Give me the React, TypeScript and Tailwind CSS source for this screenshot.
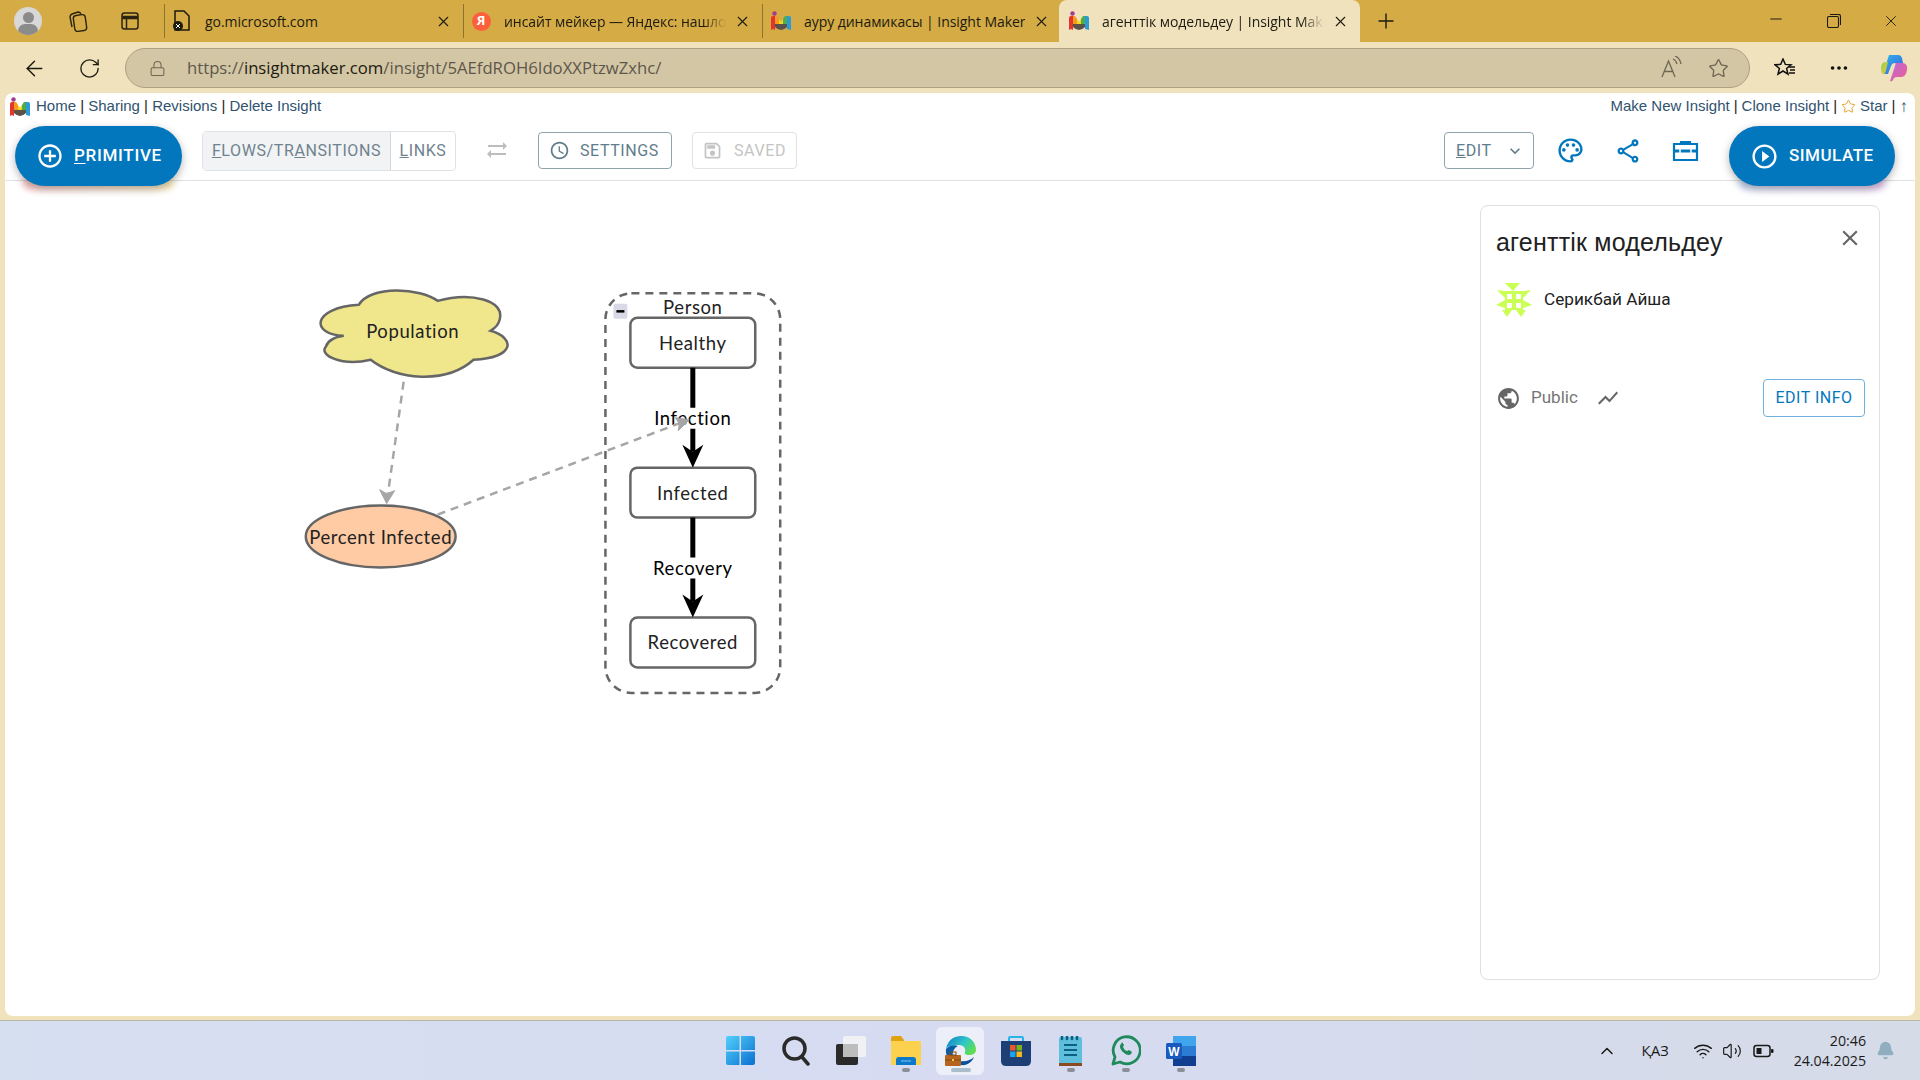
import React from "react"
import { ArrowLeft, RotateCw, Lock, Star, X, Plus, Minus, MoreHorizontal, ChevronUp, Wifi, Volume2, Bell } from "lucide-react"
import {
  MdAddCircleOutline, MdAccessTime, MdOutlineSave, MdSyncAlt, MdExpandMore, MdOutlinePalette, MdOutlineShare,
  MdPlayCircleOutline, MdPublic, MdShowChart, MdClose,
} from "react-icons/md"

function ImLogo({ size = 20 }: { size?: number }) {
  return (
    <svg width={size} height={size} viewBox="0 0 20 20">
      <circle cx="3.5" cy="2.5" r="2.2" fill="#a63a8c" />
      <path d="M0 19V7q0-2 2-2h2v14l-2-1z" fill="#e5352b" />
      <path d="M4 5h2l2 3v5H4z" fill="#f39a1f" />
      <path d="M8 8l2 3 2-3v5H8z" fill="#f7d21e" />
      <path d="M12 8l2-3h2v8h-4z" fill="#4cae4a" />
      <path d="M16 5h2q2 0 2 2v12l-4-1z" fill="#2a9bd8" />
      <path d="M4 13h12v3q-3 3-6 3t-6-3z" fill="#5a5148" />
    </svg>
  )
}

function Tab({ cls, icon, title, active, fade }: { cls: string; icon: React.ReactNode; title: string; active?: boolean; fade?: boolean }) {
  return (
    <div className={`${cls} flex items-center gap-[8px] ${active ? "h-full bg-[#f0e2bd] rounded-t-lg" : "border-l border-[#8d7230] h-[34px]"}`}>
      <div className="w-[24px] flex justify-center shrink-0">{icon}</div>
      <div className={`flex-1 whitespace-nowrap overflow-hidden text-[14px] tracking-[-0.05px] text-[#1d1a10] pl-[3px] ${fade ? "[mask-image:linear-gradient(to_right,black_90%,transparent)]" : ""}`}>{title}</div>
      <X className="w-[17px] h-[17px] text-[#1d1a10] shrink-0" strokeWidth={1.5} />
    </div>
  )
}

function Chrome() {
  return (
    <>
      <div className="h-[42px] bg-[#d4ab45] flex items-center shrink-0">
        <div className="w-[164px] h-full flex items-center shrink-0">
          <div className="ml-[14px] w-[28px] h-[28px] rounded-full bg-[#d8d8d8] overflow-hidden relative">
            <div className="absolute left-[9px] top-[5px] w-[11px] h-[11px] rounded-full bg-[#8b8b8b]" />
            <div className="absolute left-[4px] top-[17px] w-[20px] h-[14px] rounded-full bg-[#8b8b8b]" />
          </div>
          <svg className="ml-[26px]" width="20" height="22" viewBox="0 0 20 22" fill="none" stroke="#2b2410" strokeWidth="1.4">
            <rect x="6" y="5" width="12" height="16" rx="3" transform="rotate(-8 12 13)" />
            <path d="M4 17L2 7q0-2 2-3l6-2q2 0 3 2" />
          </svg>
          <svg className="ml-[33px]" width="18" height="18" viewBox="0 0 18 18" fill="none" stroke="#2b2410" strokeWidth="1.5">
            <rect x="1" y="1" width="16" height="16" rx="2.5" />
            <path d="M1 5.5h16" strokeWidth="3.5" />
            <path d="M5.5 5.5V17" />
          </svg>
        </div>
        <Tab cls="w-[299px] pl-[5px] pr-[11px]" title="go.microsoft.com" icon={
          <svg width="18" height="22" viewBox="0 0 18 22">
            <path d="M2 1h9l5 5v14H2z" fill="none" stroke="#1d1a10" strokeWidth="1.5" />
            <circle cx="5" cy="16" r="5" fill="#1d1a10" />
            <path d="M3 14l4 4m0-4l-4 4" stroke="#fff" strokeWidth="1" />
          </svg>
        } />
        <Tab cls="w-[299px] pl-[5px] pr-[11px]" title="инсайт мейкер — Яндекс: нашлось" fade icon={
          <div className="w-[19px] h-[19px] rounded-full bg-[#fc5f3b] text-white text-[13px] font-bold flex items-center justify-center">Я</div>
        } />
        <Tab cls="w-[297px] pl-[6px] pr-[9px]" title="ауру динамикасы | Insight Maker" icon={<ImLogo />} />
        <Tab cls="w-[301px] pl-[8px] pr-[11px]" title="агенттік модельдеу | Insight Maker" active fade icon={<ImLogo />} />
        <Plus className="w-[24px] h-[24px] ml-[14px] text-[#1d1a10]" strokeWidth={1.4} />
        <div className="ml-auto flex items-center">
          <Minus className="w-[18px] h-[18px] text-[#1d1a10] mr-[42px] -mt-[4px]" strokeWidth={1.3} />
          <svg className="mr-[41px]" width="14" height="14" viewBox="0 0 14 14" fill="none" stroke="#1d1a10" strokeWidth="1.1">
            <rect x="0.5" y="2.5" width="11" height="11" rx="1.5" />
            <path d="M3 0.5h8.5q2 0 2 2V11" />
          </svg>
          <X className="w-[18px] h-[18px] text-[#1d1a10] mr-[20px]" strokeWidth={1.2} />
        </div>
      </div>
      <div className="h-[51px] flex items-center shrink-0 pt-[1px]">
        <ArrowLeft className="w-[25px] h-[25px] ml-[22px] text-[#1d1a10]" strokeWidth={1.4} />
        <RotateCw className="w-[23px] h-[23px] ml-[31px] text-[#1d1a10]" strokeWidth={1.4} />
        <div className="ml-[24px] w-[1625px] h-[40px] rounded-full bg-[#d3c6a5] border border-[#ada083] flex items-center">
          <Lock className="w-[17px] h-[17px] ml-[23px] text-[#6f6754]" strokeWidth={1.5} />
          <div className="ml-[21px] text-[16.7px] text-[#5d574a] whitespace-nowrap">https://<span className="text-[#1d1a10]">insightmaker.com</span>/insight/5AEfdROH6IdoXXPtzwZxhc/</div>
          <div className="ml-auto mr-[20px] flex items-center gap-[25px] text-[#6f6754]">
            <svg width="22" height="24" viewBox="0 0 22 24" fill="none" stroke="#6f6754" strokeWidth="1.3">
              <path d="M1 21L7.500 5l6.500 16M3.500 15.500h8" />
              <path d="M12 3q3 1 4 5M14 0q5 2 6 8" />
            </svg>
            <Star className="w-[21px] h-[21px]" strokeWidth={1.5} />
          </div>
        </div>
        <svg className="ml-[24px]" width="22" height="20" viewBox="0 0 22 20" fill="none" stroke="#111" strokeWidth="1.5">
          <path d="M9 1l2.3 5.4 5.7.4-4.4 3.7 1.4 5.6L9 13l-5 3.1 1.4-5.6L1 6.8l5.7-.4z" />
          <path d="M15 9h6M16 12h5M15 15h6" />
        </svg>
        <MoreHorizontal className="ml-[32px] w-[22px] h-[22px] text-[#111]" strokeWidth={2} />
        <svg className="ml-[30px]" width="28" height="28" viewBox="0 0 28 28">
          <defs>
            <linearGradient id="cp1" x1="0" y1="0" x2="1" y2="1"><stop offset="0" stopColor="#2fb7e8" /><stop offset="1" stopColor="#3b5fe0" /></linearGradient>
            <linearGradient id="cp2" x1="0" y1="0" x2="1" y2="1"><stop offset="0" stopColor="#b86ae0" /><stop offset="1" stopColor="#f0608a" /></linearGradient>
            <linearGradient id="cp3" x1="0" y1="0" x2="1" y2="1"><stop offset="0" stopColor="#8fd14f" /><stop offset="1" stopColor="#f3c53b" /></linearGradient>
          </defs>
          <path d="M9 1h9q3 0 4 3l1 5h-8q-3 0-4 3l-3 8H3z" fill="url(#cp1)" />
          <path d="M1 14q0-6 5-6h2l-2 8q-1 5-3 4t-2-6z" fill="url(#cp3)" />
          <path d="M15 9h8q5 1 4 7t-5 7h-5q-3 0-4 3-1 2-3 1l5-15q1-3 0-3z" fill="url(#cp2)" />
        </svg>
      </div>
    </>
  )
}

function Toolbar() {
  const btn = "h-[37px] rounded border flex items-center font-['Roboto'] text-[16px] tracking-[0.6px]"
  return (
    <div className="h-[61px] border-b border-[#dfe1e3] flex items-start shrink-0 relative">
      <div className="ml-[10px] mt-[6px] relative">
        <div className="absolute left-[8px] right-[8px] bottom-[-4px] h-[14px] rounded-full bg-gradient-to-r from-[#f06a6a] to-[#f3d35a] blur-[3px] opacity-40" />
        <div className="relative w-[167px] h-[60px] rounded-full bg-[#0277bd] text-white flex items-center pl-[21px] gap-[10px] shadow-[0_3px_8px_rgba(0,0,0,0.3)] font-['Roboto'] font-medium text-[17px] tracking-[0.7px]">
          <MdAddCircleOutline className="w-[28px] h-[28px]" />
          <span><u className="underline-offset-2">P</u>RIMITIVE</span>
        </div>
      </div>
      <div className="ml-[20px] mt-[11px] w-[254px] h-[40px] rounded border border-[#e0e3e5] flex font-['Roboto'] text-[16px] tracking-[0.6px] text-[#70828e]">
        <div className="w-[188px] bg-[#f1f3f5] border-r border-[#d5d8db] flex items-center justify-center whitespace-nowrap"><span><u>F</u>LOWS/TR<u>A</u>NSITIONS</span></div>
        <div className="flex-1 flex items-center justify-center"><span><u>L</u>INKS</span></div>
      </div>
      <MdSyncAlt className="ml-[29px] mt-[18px] w-[24px] h-[24px] text-[#bdbdbd]" />
      <div className={`${btn} ml-[29px] mt-[12px] w-[134px] border-[#90a4ae] text-[#607d8b] pl-[10px] gap-[10px]`}>
        <MdAccessTime className="w-[21px] h-[21px]" /><span>SETTINGS</span>
      </div>
      <div className={`${btn} ml-[20px] mt-[12px] w-[105px] border-[#e2e2e2] text-[#c4c4c4] pl-[9px] gap-[11px]`}>
        <MdOutlineSave className="w-[21px] h-[21px]" /><span>SAVED</span>
      </div>
      <div className="ml-auto flex items-start">
        <div className={`${btn} mt-[12px] w-[90px] border-[#90a4ae] text-[#607d8b] pl-[11px]`}>
          <span><u>E</u>DIT</span><MdExpandMore className="ml-auto mr-[8px] w-[20px] h-[20px]" />
        </div>
        <div className="mt-[16px] ml-[22px] flex items-center gap-[29px] text-[#0277bd]">
          <MdOutlinePalette className="w-[29px] h-[29px]" />
          <MdOutlineShare className="w-[28px] h-[28px]" />
          <svg width="29" height="29" viewBox="0 0 29 29" fill="none" stroke="currentColor" strokeWidth="2.200">
            <path d="M10 8V6h9v2" />
            <path d="M3 8h23v16H3z" />
            <path d="M3 15h23" strokeWidth="3" />
            <path d="M9 13v4M20 13v4" stroke="#fff" strokeWidth="1.500" />
          </svg>
        </div>
        <div className="ml-[29px] mr-[20px] mt-[6px] relative">
          <div className="absolute left-[10px] right-[10px] bottom-[-4px] h-[14px] rounded-full bg-gradient-to-r from-[#7fa6e6] to-[#c77ae0] blur-[3px] opacity-40" />
          <div className="relative w-[166px] h-[60px] rounded-full bg-[#0277bd] text-white flex items-center pl-[21px] gap-[10px] shadow-[0_3px_8px_rgba(0,0,0,0.3)] font-['Roboto'] font-medium text-[17px] tracking-[0.5px]">
            <MdPlayCircleOutline className="w-[29px] h-[29px]" />
            <span>SIMULATE</span>
          </div>
        </div>
      </div>
    </div>
  )
}

function Diagram() {
  const label = "font-['Lato'] text-[18.5px] tracking-[0.6px]"
  return (
    <svg className="absolute inset-0 w-full h-full" viewBox="5 181 1910 836">
      <path d="M358 305C370 285 420 288 437 301C470 292 505 300 499 320Q498 326 490 331C515 338 515 358 473 360C445 385 395 380 370 360C340 367 318 355 325 347Q328 338 343 336C310 335 310 308 358 305Z" fill="#f0e68c" stroke="#666" strokeWidth="2.500" />
      <ellipse cx="380" cy="537" rx="75" ry="31" fill="#ffcba4" stroke="#666" strokeWidth="2.500" />
      <rect x="605" y="293.500" width="175" height="400" rx="26" fill="none" stroke="#666" strokeWidth="2.500" strokeDasharray="8 6" />
      <rect x="613" y="304" width="14" height="15" rx="2" fill="#d8d8e6" />
      <path d="M616 311.500h8" stroke="#000" strokeWidth="2.500" />
      {[318, 468, 618].map(y => (
        <rect key={y} x="630" y={y} width="125" height="50" rx="7" fill="#fff" stroke="#666" strokeWidth="2.500" />
      ))}
      <path d="M692.500 368V408M692.500 429V452M692.500 518V558M692.500 579V602" stroke="#000" strokeWidth="5" fill="none" />
      <path d="M692.500 468L682 445L692.500 452L703 445Z" fill="#000" />
      <path d="M692.500 618L682 595L692.500 602L703 595Z" fill="#000" />
      <path d="M403 382L386 503" stroke="#a6a6a6" strokeWidth="2.500" strokeDasharray="8 6" fill="none" />
      <path d="M386 504L379 490L386 494L394 491Z" fill="#a6a6a6" stroke="#a6a6a6" />
      <text x="412" y="331" textAnchor="middle" dominantBaseline="central" className={label} fill="#222">Population</text>
      <text x="380" y="537" textAnchor="middle" dominantBaseline="central" className={label} fill="#222">Percent Infected</text>
      <text x="692.500" y="307" textAnchor="middle" dominantBaseline="central" className={label} fill="#222">Person</text>
      <text x="692.500" y="343" textAnchor="middle" dominantBaseline="central" className={label} fill="#222">Healthy</text>
      <text x="692.500" y="493" textAnchor="middle" dominantBaseline="central" className={label} fill="#222">Infected</text>
      <text x="692.500" y="643" textAnchor="middle" dominantBaseline="central" className={label} fill="#222">Recovered</text>
      <text x="692.500" y="418" textAnchor="middle" dominantBaseline="central" className={label} fill="#000">Infection</text>
      <text x="692.500" y="568" textAnchor="middle" dominantBaseline="central" className={label} fill="#000">Recovery</text>
      <path d="M437 515L686 421" stroke="#a6a6a6" strokeWidth="2.500" strokeDasharray="8 6" fill="none" />
      <path d="M689 420L675 418L679 424L678 431Z" fill="#a6a6a6" stroke="#a6a6a6" />
    </svg>
  )
}

function Identicon() {
  return (
    <svg width="36" height="34" viewBox="0 0 36 34" fill="#ccff55">
      <path d="M9 0h15l-7 8zM0 22l9-5v8zM36 22l-9-5v8zM1 7l8 1v7zM35 7l-8 1v7zM6 27h10l-5 7zM20 27h10l-5 7z" />
      <path d="M9 8h18v19H9z" />
      <path d="M11 11h5v5h-5zM20 11h5v5h-5zM11 20h5v5h-5zM20 20h5v5h-5z" fill="#fff" />
    </svg>
  )
}

function InfoPanel() {
  return (
    <div className="absolute left-[1475px] top-[24px] w-[400px] h-[775px] rounded-lg border border-[#e0e0e0] bg-white font-['Roboto'] pl-[15px] pr-[15px]">
      <div className="flex items-center justify-between mt-[20px]">
        <div className="text-[25px] leading-[32px] tracking-[0.2px] text-[#212121] font-['Liberation_Sans']">агенттік модельдеу</div>
        <MdClose className="w-[26px] h-[26px] text-[#666] mr-[1px] -mt-[8px]" />
      </div>
      <div className="flex items-center gap-[12px] mt-[25px]">
        <Identicon />
        <div className="text-[17.2px] text-[#212121]">Серикбай Айша</div>
      </div>
      <div className="flex items-center mt-[62px]">
        <MdPublic className="w-[25px] h-[25px] text-[#666]" />
        <div className="ml-[10px] text-[17px] text-[#757575]">Public</div>
        <MdShowChart className="ml-[18px] w-[24px] h-[24px] text-[#666]" />
        <div className="ml-auto -mr-[1px] w-[102px] h-[38px] rounded border border-[#6fb1dd] text-[#0277bd] text-[16px] tracking-[0.5px] flex items-center justify-center">EDIT INFO</div>
      </div>
    </div>
  )
}

function Page() {
  return (
    <div className="mx-[5px] flex-1 min-h-0 bg-white rounded-lg flex flex-col text-[15px] font-['Liberation_Sans'] text-[#222]">
      <div className="h-[27px] flex items-center justify-between pl-[5px] pr-[7px] shrink-0">
        <div className="flex items-center gap-[6px]">
          <ImLogo size={20} />
          <div><span className="text-[#2f526f]">Home</span> | <span className="text-[#2f526f]">Sharing</span> | <span className="text-[#2f526f]">Revisions</span> | <span className="text-[#2f526f]">Delete Insight</span></div>
        </div>
        <div className="flex items-center gap-[4px]">
          <span className="text-[#2f526f]">Make New Insight</span><span>|</span>
          <span className="text-[#2f526f]">Clone Insight</span><span>|</span>
          <Star className="w-[15px] h-[15px] text-[#e0a52a]" strokeWidth={1.6} />
          <span className="text-[#2f526f]">Star</span><span>|</span>
          <span className="text-[#2f526f] text-[17px] leading-none">↑</span>
        </div>
      </div>
      <Toolbar />
      <div className="flex-1 relative">
        <Diagram />
        <InfoPanel />
      </div>
    </div>
  )
}

function Dot({ color = "#8b8f99", w = "w-[8px]" }: { color?: string; w?: string }) {
  return <div className={`absolute bottom-[3px] left-1/2 -translate-x-1/2 h-[4px] rounded-full ${w}`} style={{ background: color }} />
}

function Cell({ children, dot, active }: { children: React.ReactNode; dot?: boolean; active?: boolean }) {
  return (
    <div className="w-[55px] h-[48px] relative flex items-center justify-center">
      {active && <div className="absolute left-[3px] top-0 w-[48px] h-[48px] rounded-md bg-[#edeff8]" />}
      <div className="relative flex">{children}</div>
      {dot && <Dot />}
      {active && <Dot color="#a9bdcb" w="w-[20px]" />}
    </div>
  )
}

function Taskbar() {
  return (
    <div className="h-[60px] shrink-0 border-t border-[#b8b6aa] bg-gradient-to-r from-[#d6dff0] via-[#d6dbf1] to-[#d5dbe7] flex items-center font-['Open_Sans'] text-[#1a1a1a]">
      <div className="ml-[713px] flex items-center">
        <Cell>
          <svg width="29" height="29" viewBox="0 0 29 29">
            <defs><linearGradient id="win" x1="0" y1="0" x2="1" y2="1"><stop offset="0" stopColor="#52d0fb" /><stop offset="1" stopColor="#0a6fd0" /></linearGradient></defs>
            <path d="M0 2q0-2 2-2h11.500v14H0zM15 0h12q2 0 2 2v12H15zM0 15.500h13.500V29H2q-2 0-2-2zM15 15.500h14V27q0 2-2 2H15z" fill="url(#win)" />
          </svg>
        </Cell>
        <Cell>
          <svg width="28" height="30" viewBox="0 0 28 30" fill="none" stroke="#2a2a2a" strokeWidth="3.500">
            <circle cx="12.500" cy="12.500" r="10.500" /><path d="M20 21l6 7" strokeLinecap="round" />
          </svg>
        </Cell>
        <Cell>
          <svg width="30" height="30" viewBox="0 0 30 30">
            <rect x="0" y="8" width="22" height="21" rx="2" fill="#2a2a2a" />
            <rect x="7" y="0" width="23" height="21" rx="2" fill="#f4f4f4" opacity="0.85" />
            <rect x="7" y="8" width="15" height="13" fill="#bdbdbd" />
          </svg>
        </Cell>
        <Cell dot>
          <svg width="30" height="30" viewBox="0 0 30 30">
            <path d="M0 2q0-2 2-2h8l3 4v25H0z" fill="#e0a30f" />
            <rect x="0" y="5" width="30" height="24" fill="#fcd14d" />
            <path d="M5 29v-5q0-3 3-3h14q3 0 3 3v5z" fill="#0c78c9" />
            <path d="M10 25h10" stroke="#7cc3ef" strokeWidth="1" />
          </svg>
        </Cell>
        <Cell active>
          <svg width="32" height="32" viewBox="0 0 32 32">
            <defs><linearGradient id="edge" x1="0" y1="0" x2="1" y2="0.600"><stop offset="0" stopColor="#0c79c9" /><stop offset="0.600" stopColor="#32c7c7" /><stop offset="1" stopColor="#5fdc52" /></linearGradient></defs>
            <path d="M1 14C3 4 10 1 16 1c9 0 15 6 15 14 0 3-3 5-7 5-3 0-5-1-4-3 1-3-1-7-6-7C8 10 3 11 1 14z" fill="url(#edge)" />
            <path d="M1 14c3-3 8-5 12-3-4 2-6 6-5 11 0 3 1 5 3 7C5 27 0 21 1 14z" fill="#0a5ea8" />
            <path d="M15 26c6 1 11-1 14-4-2 5-7 9-13 8z" fill="#0c4f9c" />
            <rect x="0" y="20" width="16" height="11" rx="1" fill="#b5651d" />
            <rect x="5" y="17" width="6" height="3" fill="none" stroke="#7c4a12" strokeWidth="1" />
            <path d="M0 25h16" stroke="#7c4a12" strokeWidth="1" />
            <rect x="7" y="24" width="2" height="2" fill="#f5c542" />
          </svg>
        </Cell>
        <Cell>
          <svg width="30" height="30" viewBox="0 0 30 30">
            <path d="M8 5V2q0-1 1-1h12q1 0 1 1v3" fill="none" stroke="#27b5e8" strokeWidth="2" />
            <path d="M0 5h30v20q0 5-5 5H5q-5 0-5-5z" fill="#1d3f75" />
            <rect x="9" y="9" width="5.500" height="5.500" fill="#e9572c" /><rect x="15.500" y="9" width="5.500" height="5.500" fill="#7cb518" />
            <rect x="9" y="15.500" width="5.500" height="5.500" fill="#1da1e8" /><rect x="15.500" y="15.500" width="5.500" height="5.500" fill="#f5b91a" />
          </svg>
        </Cell>
        <Cell dot>
          <svg width="23" height="30" viewBox="0 0 23 30">
            <rect x="0" y="1" width="23" height="27" rx="2" fill="#5dbfdc" />
            <rect x="0" y="27" width="23" height="3" fill="#8a4a22" />
            <path d="M3 0v3M8 0v3M13 0v3M18 0v3" stroke="#0f5f82" strokeWidth="2.500" strokeLinecap="round" />
            <path d="M5 9h13M5 14h13M5 19h13" stroke="#0f5f82" strokeWidth="1.800" />
          </svg>
        </Cell>
        <Cell dot>
          <svg width="30" height="31" viewBox="0 0 30 31" fill="none">
            <path d="M2 29l2-7a13.500 13.500 0 1 1 5 5z" stroke="#1f8a5b" strokeWidth="2.800" strokeLinejoin="round" />
            <path d="M10 9c-2 2-1 5 2 8s6 4 8 2l1-2-3-2-2 1q-3-1-4-4l1-2-2-3z" fill="#1f8a5b" />
          </svg>
        </Cell>
        <Cell dot>
          <svg width="30" height="30" viewBox="0 0 30 30">
            <rect x="7" y="0" width="23" height="10" fill="#41a5ee" /><rect x="7" y="10" width="23" height="10" fill="#2b7cd3" /><rect x="7" y="20" width="23" height="10" fill="#103f91" />
            <rect x="0" y="7" width="16" height="16" rx="1.500" fill="#185abd" />
            <text x="8" y="19.500" textAnchor="middle" fill="#fff" className="font-['Liberation_Sans'] font-bold text-[12px]">W</text>
          </svg>
        </Cell>
      </div>
      <div className="ml-auto flex items-center mr-[25px]">
        <ChevronUp className="w-[20px] h-[20px]" strokeWidth={1.8} />
        <div className="ml-[24px] text-[14.5px]">ҚАЗ</div>
        <Wifi className="ml-[24px] w-[20px] h-[20px]" strokeWidth={1.7} />
        <Volume2 className="ml-[9px] w-[20px] h-[20px]" strokeWidth={1.4} />
        <svg className="ml-[11px]" width="21" height="14" viewBox="0 0 21 14" fill="none">
          <rect x="1" y="1.500" width="16" height="11" rx="2.500" stroke="#1a1a1a" strokeWidth="1.500" />
          <rect x="3.500" y="4" width="5" height="6" fill="#1a1a1a" />
          <rect x="18" y="5" width="2.500" height="4" rx="1" fill="#1a1a1a" />
        </svg>
        <div className="ml-[20px] text-right text-[14.2px] leading-[20px]">
          <div>20:46</div>
          <div>24.04.2025</div>
        </div>
        <Bell className="ml-[10px] w-[19px] h-[19px] text-[#90aebf] fill-[#90aebf]" />
      </div>
    </div>
  )
}

export default function App() {
  return (
    <div className="w-[1920px] h-[1080px] overflow-hidden flex flex-col bg-[#f0e2bd] font-['Open_Sans']">
      <Chrome />
      <Page />
      <div className="h-[4px] shrink-0" />
      <Taskbar />
    </div>
  )
}
